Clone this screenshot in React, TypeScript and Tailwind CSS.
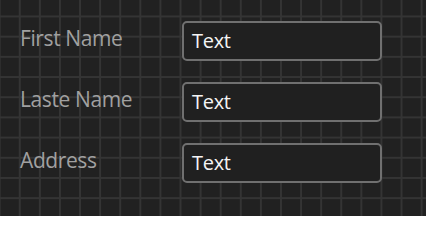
import React from "react";

const fields = [
  { label: "First Name", value: "Text" },
  { label: "Laste Name", value: "Text" },
  { label: "Address", value: "Text" },
];

export default function App() {
  return (
    <div
      className="w-[426px] h-[216px] overflow-hidden bg-[#212121] bg-[linear-gradient(to_right,#343434_1.5px,transparent_1.5px),linear-gradient(to_bottom,#343434_1.5px,transparent_1.5px)] bg-[size:20.1px_20.2px] bg-[position:18.8px_15.5px]"
      style={{ fontFamily: '"Open Sans", "Noto Sans", sans-serif' }}
    >
      <div className="flex flex-col gap-[21px] pt-[21px] pl-[20px]">
        {fields.map((f) => (
          <div key={f.label} className="flex items-start">
            <div className="w-[162px] pt-[3px] text-[21px] leading-[28px] tracking-[-0.4px] text-[#a0a0a0]">
              {f.label}
            </div>
            <div className="w-[200px] h-[40px] flex items-center rounded-[5px] border-2 border-[#707070] bg-[#202020] pl-[8px] pr-2 text-[20px] tracking-[-0.3px] text-[#f4f4f4]">
              {f.value}
            </div>
          </div>
        ))}
      </div>
    </div>
  );
}
